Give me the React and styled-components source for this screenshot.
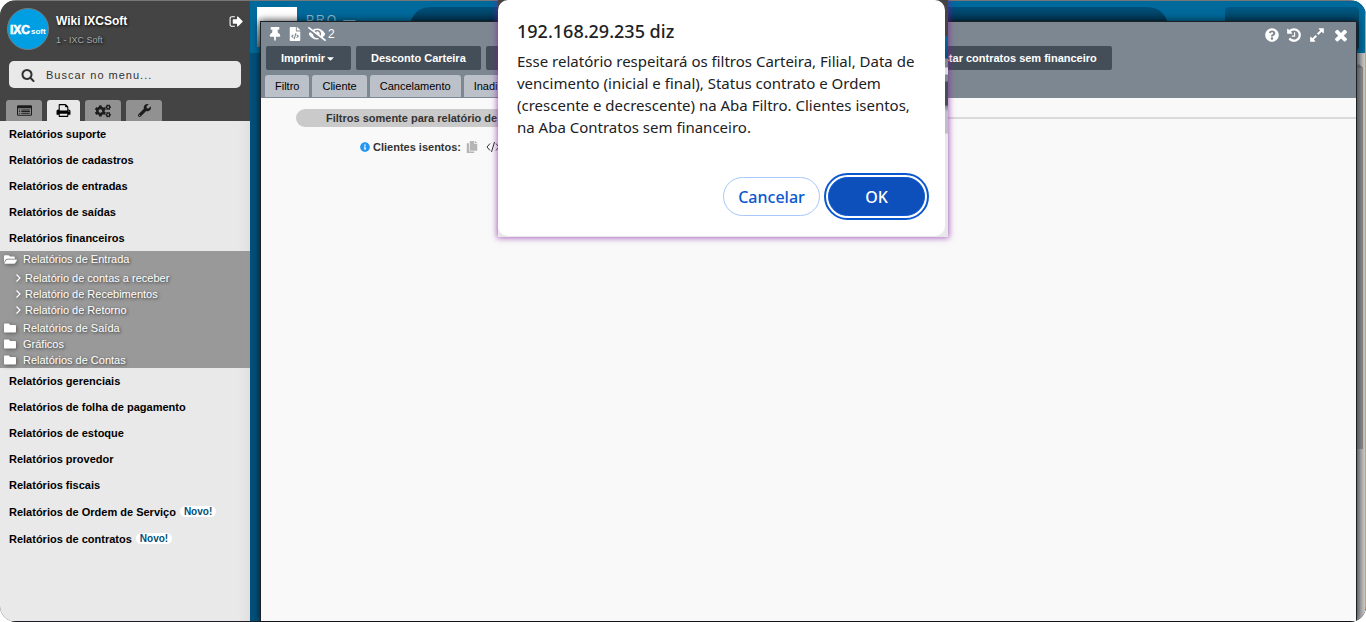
import React, { useState } from "react";
import styled, { createGlobalStyle } from "styled-components";
import {
  FaCaretDown,
  FaCogs,
  FaCopy,
  FaEyeSlash,
  FaFileCode,
  FaFolder,
  FaFolderOpen,
  FaInfoCircle,
  FaQuestionCircle,
  FaThumbtack,
  FaWrench,
} from "react-icons/fa";

const paths = {
  signOut:
    "M704 1440q0 4 1 20t.5 26.5-3 23.5-10 19.5-20.5 6.5h-320q-119 0-203.5-84.5t-84.5-203.5v-704q0-119 84.5-203.5t203.5-84.5h320q13 0 22.5 9.5t9.5 22.5q0 4 1 20t.5 26.5-3 23.5-10 19.5-20.5 6.5h-320q-66 0-113 47t-47 113v704q0 66 47 113t113 47h312l11.5 1 11.5 3 8 5.5 7 9 2 13.5zm928-544q0 26-19 45l-544 544q-19 19-45 19t-45-19-19-45v-288h-448q-26 0-45-19t-19-45v-384q0-26 19-45t45-19h448v-288q0-26 19-45t45-19 45 19l544 544q19 19 19 45z",
  search:
    "M1216 832q0-185-131.5-316.5t-316.5-131.5-316.5 131.5-131.5 316.5 131.5 316.5 316.5 131.5 316.5-131.5 131.5-316.5zm512 832q0 52-38 90t-90 38q-54 0-90-38l-343-342q-179 124-399 124-143 0-273.5-55.5t-225-150-150-225-55.5-273.5 55.5-273.5 150-225 225-150 273.5-55.5 273.5 55.5 225 150 150 225 55.5 273.5q0 220-124 399l343 343q37 37 37 90z",
  list: "M160 256h1472q160 0 160 160v960q0 160-160 160h-1472q-160 0-160-160v-960q0-160 160-160zm-32 384v736q0 32 32 32h1472q32 0 32-32v-736zm128 128h128v128h-128zm256 0h1024v128h-1024zm-256 192h128v128h-128zm256 0h1024v128h-1024zm-256 192h128v128h-128zm256 0h1024v128h-1024z",
  print:
    "M448 1536h896v-256h-896v256zm0-640h896v-384h-160q-40 0-68-28t-28-68v-160h-640v640zm1152 64q0-26-19-45t-45-19-45 19-19 45 19 45 45 19 45-19 19-45zm128 0v416q0 13-9.5 22.5t-22.5 9.5h-224v160q0 40-28 68t-68 28h-960q-40 0-68-28t-28-68v-160h-224q-13 0-22.5-9.5t-9.5-22.5v-416q0-79 56.5-135.5t135.5-56.5h64v-544q0-40 28-68t68-28h672q40 0 88 20t76 48l152 152q28 28 48 76t20 88v256h64q79 0 135.5 56.5t56.5 135.5z",
  history:
    "M1664 896q0 156-61 298t-164 245-245 164-298 61q-172 0-327-72.5t-264-204.5q-7-10-6.5-22.5t8.5-20.5l137-138q10-9 25-9 16 2 23 12 73 95 179 147t225 52q104 0 198.5-40.5t163.5-109.5 109.5-163.5 40.5-198.5-40.5-198.5-109.5-163.5-163.5-109.5-198.5-40.5q-98 0-188 35.5t-160 101.5l137 138q31 30 14 69-17 40-59 40h-448q-26 0-45-19t-19-45v-448q0-42 40-59 39-17 69 14l130 129q107-101 244.5-156.5t284.5-55.5q156 0 298 61t245 164 164 245 61 298zm-640-288v448q0 14-9 23t-23 9h-320q-14 0-23-9t-9-23v-64q0-14 9-23t23-9h224v-352q0-14 9-23t23-9h64q14 0 23 9t9 23z",
  expand:
    "M883 1056q0 13-10 23l-332 332 144 144q19 19 19 45t-19 45-45 19h-448q-26 0-45-19t-19-45v-448q0-26 19-45t45-19 45 19l144 144 332-332q10-10 23-10t23 10l114 114q10 10 10 23zm781-864v448q0 26-19 45t-45 19-45-19l-144-144-332 332q-10 10-23 10t-23-10l-114-114q-10-10-10-23t10-23l332-332-144-144q-19-19-19-45t19-45 45-19h448q26 0 45 19t19 45z",
  close:
    "M1490 1322q0 40-28 68l-136 136q-28 28-68 28t-68-28l-294-294-294 294q-28 28-68 28t-68-28l-136-136q-28-28-28-68t28-68l294-294-294-294q-28-28-28-68t28-68l136-136q28-28 68-28t68 28l294 294 294-294q28-28 68-28t68 28l136 136q28 28 28 68t-28 68l-294 294 294 294q28 28 28 68z",
};

const Icon = ({ name, size = 16 }) => (
  <svg width={size} height={size} viewBox='0 0 1792 1792' fill='currentColor' fillRule='evenodd' aria-hidden='true'>
    <path d={paths[name]} />
  </svg>
);

const Angle = () => (
  <svg width='10' height='10' viewBox='0 0 10 10' fill='none' stroke='currentColor' strokeWidth='1.2' aria-hidden='true'>
    <path d='M3.5 1.5L7 5L3.5 8.5' />
  </svg>
);

const CodeMark = () => (
  <svg width='14' height='12' viewBox='0 0 14 12' fill='none' stroke='currentColor' aria-hidden='true'>
    <path d='M4 2.5L1 6L4 9.5M8.5 1L5.5 11M10 2.5L13 6L10 9.5' />
  </svg>
);

const menuBefore = ["Relatórios suporte", "Relatórios de cadastros", "Relatórios de entradas", "Relatórios de saídas", "Relatórios financeiros"];

const menuAfter = [
  { label: "Relatórios gerenciais" },
  { label: "Relatórios de folha de pagamento" },
  { label: "Relatórios de estoque" },
  { label: "Relatórios provedor" },
  { label: "Relatórios fiscais" },
  { label: "Relatórios de Ordem de Serviço", isNew: true },
  { label: "Relatórios de contratos", isNew: true },
];

const Sidebar = () => {
  const [search, setSearch] = useState("");

  return (
    <StyledSidebar>
      <SidebarTop>
        <UserRow>
          <Logo viewBox='0 0 42 42' role='img' aria-label='IXCsoft'>
            <circle cx='21' cy='21' r='20.5' fill='#009fe3' stroke='#6d7f88' />
            <text x='3' y='26' fontSize='12' fontWeight='bold' stroke='#fff' strokeWidth='0.6'>
              IXC
            </text>
            <text x='24' y='26' fontSize='8' fontWeight='bold'>
              soft
            </text>
          </Logo>
          <UserInfo>
            <UserName>Wiki IXCSoft</UserName>
            <UserBranch>1 - IXC Soft</UserBranch>
          </UserInfo>
          <IconButton aria-label='Sair'>
            <Icon name='signOut' size={15} />
          </IconButton>
        </UserRow>
        <SearchBox>
          <Icon name='search' size={14} />
          <input aria-label='Buscar no menu' placeholder='Buscar no menu...' value={search} onChange={(e) => setSearch(e.target.value)} />
        </SearchBox>
        <MenuTabs>
          <MenuTab aria-label='Cadastros'>
            <Icon name='list' size={15} />
          </MenuTab>
          <MenuTab aria-label='Relatórios' $active>
            <Icon name='print' size={15} />
          </MenuTab>
          <MenuTab aria-label='Configurações'>
            <FaCogs size={16} />
          </MenuTab>
          <MenuTab aria-label='Ferramentas'>
            <FaWrench size={13} />
          </MenuTab>
        </MenuTabs>
      </SidebarTop>
      <Menu>
        {menuBefore.map((label) => (
          <MenuItem href='#' key={label}>
            {label}
          </MenuItem>
        ))}
        <Submenu>
          <Folder href='#' $open>
            <FaFolderOpen size={13} />
            Relatórios de Entrada
          </Folder>
          <Reports>
            {["Relatório de contas a receber", "Relatório de Recebimentos", "Relatório de Retorno"].map((label) => (
              <Report href='#' key={label}>
                <Angle />
                {label}
              </Report>
            ))}
          </Reports>
          {["Relatórios de Saída", "Gráficos", "Relatórios de Contas"].map((label) => (
            <Folder href='#' key={label}>
              <FaFolder size={12} />
              {label}
            </Folder>
          ))}
        </Submenu>
        {menuAfter.map(({ label, isNew }) => (
          <MenuItem href='#' key={label} $tall={isNew}>
            {label}
            {isNew && <NewTag>Novo!</NewTag>}
          </MenuItem>
        ))}
      </Menu>
    </StyledSidebar>
  );
};

const ReportWindow = () => (
  <StyledWindow>
    <WindowBar>
      <TitleRow>
        <TitleIcons $gap={6}>
          <IconButton aria-label='Fixar'>
            <FaThumbtack size={14} />
          </IconButton>
          <IconButton aria-label='Código'>
            <FaFileCode size={14} />
          </IconButton>
          <HiddenCount>
            <FaEyeSlash size={18} />2
          </HiddenCount>
        </TitleIcons>
        <TitleIcons $gap={7} $low>
          <IconButton aria-label='Ajuda'>
            <FaQuestionCircle size={14} />
          </IconButton>
          <IconButton aria-label='Histórico'>
            <Icon name='history' />
          </IconButton>
          <IconButton aria-label='Expandir'>
            <Icon name='expand' />
          </IconButton>
          <IconButton aria-label='Fechar'>
            <Icon name='close' size={18} />
          </IconButton>
        </TitleIcons>
      </TitleRow>
      <Actions>
        <Action>
          Imprimir
          <FaCaretDown size={11} />
        </Action>
        <Action>Desconto Carteira</Action>
        <Action $wide>Listar contratos sem financeiro</Action>
      </Actions>
      <Tabs>
        <Tab>Filtro</Tab>
        <Tab>Cliente</Tab>
        <Tab>Cancelamento</Tab>
        <Tab $wide>Inadi</Tab>
      </Tabs>
    </WindowBar>
    <WindowBody>
      <Section>
        <h2>Filtros somente para relatório de</h2>
      </Section>
      <Field>
        <FaInfoCircle size={10} color='#2196f3' />
        <b>Clientes isentos:</b>
        <FaCopy size={12} color='#b5b5b5' />
        <CodeMark />
      </Field>
    </WindowBody>
  </StyledWindow>
);

const App = () => (
  <>
    <GlobalStyle />
    <Page>
      <Sidebar />
      <Desktop>
        <Header>
          <Picture />
          <Brand>PRO —</Brand>
          <HeaderSearch />
          <HeaderBox />
        </Header>
        <Scrollbar>
          <ScrollArrow />
          <ScrollThumb />
        </Scrollbar>
        <ReportWindow />
      </Desktop>
      <DialogFrame>
        <Dialog role='alertdialog' aria-labelledby='dialog-title' aria-describedby='dialog-text'>
          <h1 id='dialog-title'>192.168.29.235 diz</h1>
          <p id='dialog-text'>
            Esse relatório respeitará os filtros Carteira, Filial, Data de vencimento (inicial e final), Status contrato e Ordem (crescente e
            decrescente) na Aba Filtro. Clientes isentos, na Aba Contratos sem financeiro.
          </p>
          <DialogButtons>
            <DialogButton>Cancelar</DialogButton>
            <DialogButton $primary>OK</DialogButton>
          </DialogButtons>
        </Dialog>
      </DialogFrame>
    </Page>
  </>
);

const GlobalStyle = createGlobalStyle`
  * {
    box-sizing: border-box;
  }
  body {
    margin: 0;
    background: #fff;
    font-family: "Liberation Sans", Arial, sans-serif;
    font-size: 11px;
  }
  button,
  input {
    font-family: inherit;
  }
  a {
    color: inherit;
    text-decoration: none;
  }
  svg {
    flex: none;
  }
`;

const Page = styled.div`
  position: relative;
  display: flex;
  height: 100vh;
  padding: 1px 0;
  overflow: hidden;
  border-radius: 16px;
  background: linear-gradient(#777 50%, #1c1c22 50%);
`;

const StyledSidebar = styled.aside`
  display: flex;
  flex-direction: column;
  width: 250px;
  flex: none;
`;

const SidebarTop = styled.div`
  background: #444;
  padding: 7px 6px 0;
`;

const UserRow = styled.div`
  display: flex;
  align-items: flex-start;
  height: 53px;
`;

const Logo = styled.svg`
  width: 42px;
  height: 42px;
  margin-left: 1px;
  fill: #fff;
`;

const UserInfo = styled.div`
  flex: 1;
  padding: 4px 0 0 7px;
  text-shadow: 1px 1px 3px #000;
`;

const UserName = styled.div`
  color: #fff;
  font-size: 12px;
  font-weight: bold;
  line-height: 18px;
`;

const UserBranch = styled.div`
  color: #aaa;
  font-size: 9px;
  line-height: 20px;
`;

const IconButton = styled.button`
  display: inline-flex;
  align-items: center;
  padding: 0;
  border: 0;
  background: none;
  color: #fff;
  ${UserRow} & {
    margin-top: 6px;
  }
`;

const SearchBox = styled.label`
  display: flex;
  align-items: center;
  height: 27px;
  margin: 0 3px;
  padding: 0 12px;
  gap: 11px;
  border-radius: 5px;
  background: #e9e9e9;
  color: #333;
  input {
    flex: 1;
    min-width: 0;
    padding: 0;
    border: 0;
    outline: 0;
    background: none;
    font-size: 11px;
    letter-spacing: 1px;
  }
  input::placeholder {
    color: #333;
  }
`;

const MenuTabs = styled.div`
  display: flex;
  align-items: flex-end;
  gap: 5px;
  height: 33px;
`;

const MenuTab = styled.button`
  display: flex;
  align-items: center;
  justify-content: center;
  width: ${(props) => (props.$active ? "33px" : "36px")};
  height: 21px;
  padding: 0;
  border: 0;
  border-radius: 3px 3px 0 0;
  background: ${(props) => (props.$active ? "#e9e9e9" : "#919191")};
  color: ${(props) => (props.$active ? "#000" : "#1c1c1c")};
`;

const Menu = styled.nav`
  flex: 1;
  background: linear-gradient(to left, #e0e0e0, #e9e9e9 12px);
`;

const MenuItem = styled.a`
  display: flex;
  align-items: center;
  height: ${(props) => (props.$tall ? "27px" : "26px")};
  padding-left: 9px;
  font-weight: bold;
  color: #000;
`;

const NewTag = styled.span`
  margin-left: 4px;
  padding: 0 4px;
  border-radius: 6px;
  background: #fff;
  color: #00517c;
  font-size: 10px;
  line-height: 11px;
`;

const Submenu = styled.div`
  background: #999;
  color: #fff;
  text-shadow: 1px 1px 3px #333;
  svg {
    filter: drop-shadow(1px 1px 2px #555);
  }
`;

const Folder = styled.a`
  display: flex;
  align-items: center;
  height: 16px;
  padding-left: 4px;
  gap: ${(props) => (props.$open ? "6px" : "7px")};
`;

const Reports = styled.div`
  padding: 3px 0 2px;
`;

const Report = styled.a`
  display: flex;
  align-items: center;
  gap: 2px;
  height: 16px;
  padding-left: 13px;
`;

const Desktop = styled.main`
  position: relative;
  display: flex;
  flex-direction: column;
  flex: 1;
  min-width: 0;
  border-right: 1px solid #d9a05a;
  background: #00517c;
`;

const Header = styled.header`
  display: flex;
  height: 52px;
  padding: 6px 6px 3px 7px;
  background: #006a9c;
`;

const Picture = styled.div`
  width: 40px;
  height: 40px;
  background: linear-gradient(#fff 20%, #777);
`;

const Brand = styled.div`
  width: 113px;
  padding: 6px 0 0 9px;
  color: #8fbdd4;
  font-size: 12px;
  letter-spacing: 2px;
`;

const HeaderSearch = styled.div`
  flex: 1;
  margin-right: 57px;
  border-radius: 20px;
  background: linear-gradient(#00517c, #003450 16px);
`;

const HeaderBox = styled.div`
  width: 134px;
  border-radius: 4px;
  background: linear-gradient(#005a85, #003a58 20px);
`;

const Scrollbar = styled.div`
  display: flex;
  flex-direction: column;
  align-items: flex-end;
  align-self: flex-end;
  flex: 1;
  width: 8px;
  padding-right: 2px;
  background: linear-gradient(to right, #999, #ccc);
`;

const ScrollArrow = styled.div`
  height: 15px;
  border: 4px solid transparent;
  border-bottom: 4px solid #777;
`;

const ScrollThumb = styled.div`
  width: 6px;
  height: 67%;
  background: #8b8b8b;
`;

// the window floats over the desktop
const StyledWindow = styled.section`
  position: absolute;
  inset: 20px 8px 0 10px;
  display: flex;
  flex-direction: column;
  border: 1px solid #1c2126;
  border-bottom: 0;
  background: #f9f9f9;
  box-shadow: 0 0 8px rgba(0, 0, 0, 0.7);
`;

const WindowBar = styled.div`
  background: #7d8791;
  padding: 0 4px;
`;

const TitleRow = styled.div`
  display: flex;
  justify-content: space-between;
  height: 24px;
  padding: 0 2px 0 3px;
`;

const TitleIcons = styled.div`
  display: flex;
  align-items: center;
  gap: ${(props) => props.$gap}px;
  padding-top: ${(props) => (props.$low ? "2px" : "0")};
`;

const HiddenCount = styled.span`
  display: inline-flex;
  align-items: center;
  gap: 2px;
  color: #fff;
  font-size: 12px;
`;

const Actions = styled.div`
  display: flex;
  gap: 5px;
  padding-left: 1px;
`;

const Action = styled.button`
  display: flex;
  align-items: center;
  justify-content: flex-end;
  width: ${(props) => (props.$wide ? "626px" : "auto")};
  height: 24px;
  padding: 0 15px;
  border: 0;
  border-radius: 2px;
  background: #444e58;
  color: #fff;
  font-size: 11px;
  font-weight: bold;
`;

const Tabs = styled.div`
  display: flex;
  gap: 3px;
  padding-top: 5px;
  height: 28px;
`;

const Tab = styled.button`
  width: ${(props) => (props.$wide ? "90px" : "auto")};
  height: 22px;
  padding: 0 10px;
  border: 0;
  border-radius: 3px 3px 0 0;
  background: #bcc0c8;
  color: #000;
  font-size: 11px;
  text-align: left;
`;

const WindowBody = styled.div`
  flex: 1;
  padding: 11px 0 0 35px;
`;

const Section = styled.div`
  display: flex;
  align-items: center;
  h2 {
    margin: 0;
    padding: 0 30px;
    border-radius: 9px;
    background: #cacaca;
    color: #333;
    font-size: 11px;
    line-height: 18px;
  }
  &::after {
    content: "";
    flex: 1;
    height: 2px;
    background: #dadada;
  }
`;

const Field = styled.div`
  display: flex;
  align-items: center;
  gap: 3px;
  padding: 13px 0 0 64px;
  color: #333;
  line-height: 14px;
  b + svg {
    margin: 0 5px 0 2px;
  }
`;

const DialogFrame = styled.div`
  position: absolute;
  top: 0;
  left: 498px;
  width: 450px;
  height: 237px;
  padding: 0 3px 1px 0;
  background: linear-gradient(
    #444 36px,
    #006a9c 37px,
    #00517c 58px,
    #7d8791 59px,
    #7d8791 67px,
    #ddd 68px,
    #ddd 74px,
    #7d8791 75px,
    #7d8791 81px,
    #444e58 82px,
    #444e58 105px,
    #7d8791 106px,
    #bcc0c8 112px,
    #bcc0c8 133px,
    #e8e8e8 134px
  );
  box-shadow: 0 0 6px 1px rgba(130, 20, 160, 0.65);
`;

const Dialog = styled.div`
  display: flex;
  flex-direction: column;
  height: 100%;
  padding: 19px 17px 16px 19px;
  border-radius: 10px;
  background: #fff;
  color: #202124;
  font-family: "Noto Sans", sans-serif;
  h1 {
    margin: 0;
    font-size: 18px;
    font-weight: 500;
    line-height: 24px;
  }
  p {
    flex: 1;
    margin: 7px 0 0;
    font-size: 15px;
    line-height: 22px;
  }
`;

const DialogButtons = styled.div`
  display: flex;
  align-items: center;
  justify-content: flex-end;
  gap: 8px;
  padding: 0 3px 4px;
`;

const DialogButton = styled.button`
  width: 97px;
  height: 39px;
  padding: 0;
  border: 1px solid ${(props) => (props.$primary ? "#0b57d0" : "#a8c7fa")};
  border-radius: 20px;
  outline: ${(props) => (props.$primary ? "2px solid #0b57d0" : "none")};
  outline-offset: 2px;
  background: ${(props) => (props.$primary ? "#0d50bc" : "#fff")};
  color: ${(props) => (props.$primary ? "#fff" : "#0b57d0")};
  font-size: 16px;
  font-weight: 500;
`;

export default App;
